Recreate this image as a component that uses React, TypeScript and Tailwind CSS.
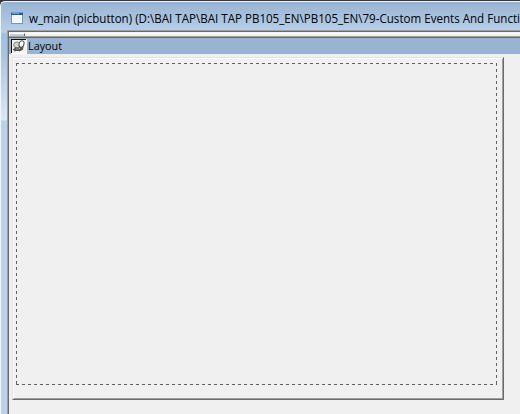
import React from 'react';

function WindowIcon() {
  return (
    <svg width="13" height="13" viewBox="0 0 13 13" className="block shrink-0" shapeRendering="crispEdges">
      <rect x="0" y="0" width="12" height="12" fill="#7894ba" />
      <rect x="1" y="1" width="10" height="10" fill="#fff" />
      <rect x="0" y="0" width="12" height="1" fill="#6d9bdc" />
      <rect x="0" y="1" width="12" height="2" fill="#1c5abd" />
      <rect x="1" y="1" width="7" height="1" fill="#5c9eea" />
      <rect x="2" y="4" width="8" height="6" fill="#f5f8fa" />
    </svg>
  );
}

function PushPin() {
  return (
    <svg width="16" height="15" viewBox="0 0 16 15" className="block shrink-0">
      <g shapeRendering="crispEdges">
        <rect width="16" height="15" fill="#fff" />
        <rect width="15" height="14" fill="#111" />
        <rect x="1" y="1" width="14" height="13" fill="#f4f4f0" />
      </g>
      <path d="M3 10L7 8L13 6L12 10L8 12L4 12Z" fill="#55558e" />
      <path d="M2 11L5 9M3 12L7 11M8 12L12 10" stroke="#57513a" strokeWidth="1.2" />
      <ellipse cx="6" cy="6" rx="3.4" ry="3" fill="#d3d3cc" stroke="#888880" />
      <ellipse cx="10.5" cy="5" rx="2.4" ry="3.3" fill="#fff" stroke="#55554d" transform="rotate(20 10.5 5)" />
      <path d="M4 8Q7 11 9 8L10 9Q9 11 6 11" fill="#bcb99c" stroke="#444438" strokeWidth=".7" />
    </svg>
  );
}

export default function App() {
  return (
    <div className="flex h-[414px] w-[520px] flex-col overflow-hidden bg-[#38343c] pt-px font-['Open_Sans','Noto_Sans',sans-serif] text-black">
      <div className="flex min-h-0 flex-1 flex-col rounded-tl-[5px] border-t border-l border-[#f2f6fa] bg-[linear-gradient(180deg,#98b3d2_0px,#b8d0ea_30px,#a3c0df_32px,#a6c3e2_50px,#d9e8f6_117px,#d9e8f6_118px,#b9d1ea_119px)]">
        <header className="flex h-[28px] shrink-0 items-start pt-[10px] pl-[10px]">
          <WindowIcon />
          <svg width="492" height="20" className="-mt-[3px] ml-[4px] block shrink-0 overflow-visible">
            <text x="1" y="14" fontSize="12" textLength="491" lengthAdjust="spacingAndGlyphs">
              w_main (picbutton) (D:\BAI TAP\BAI TAP PB105_EN\PB105_EN\79-Custom Events And Functi
            </text>
          </svg>
        </header>
        <div className="ml-[6px] flex min-h-0 flex-1 flex-col border-t border-l border-[#a0a0a0]">
          <div className="flex min-h-0 flex-1 flex-col border-t border-l border-[#696969] bg-[#f0f0f0]">
            <div className="flex h-[4px] shrink-0 bg-[linear-gradient(180deg,#f0f0f0_1px,#ffffff_1px,#ffffff_2px,#f0f0f0_2px)]">
              <div className="mt-px h-[3px] w-[16px] border-t border-l border-r border-t-white border-l-white border-r-[#696969] bg-[#bfd0e3]" />
            </div>
            <div className="flex h-[18px] shrink-0 items-start border-t border-[#a0a0a0] bg-[#99b4d1]">
              <div className="flex h-[17px] flex-1 items-start border-t border-[#696969] pt-px pl-[2px]">
                <PushPin />
                <svg width="40" height="16" className="-mt-px block overflow-visible">
                  <text x="1" y="12" fontSize="11.5" textLength="34" lengthAdjust="spacingAndGlyphs">Layout</text>
                </svg>
              </div>
            </div>
            <div className="mt-[3px] ml-[3px] h-[343px] w-[492px] border border-t-[#e3e3e3] border-l-[#e3e3e3] border-r-[#696969] border-b-[#696969]">
              <div className="h-full w-full border border-t-white border-l-white border-r-[#a0a0a0] border-b-[#a0a0a0]">
                <svg width="488" height="339" className="block" shapeRendering="crispEdges">
                  <path d="M2 4.5H483M2 325.5H483M2.5 4V326M482.5 4V326" fill="none" stroke="#606060" strokeDasharray="3 3" />
                </svg>
              </div>
            </div>
          </div>
        </div>
      </div>
    </div>
  );
}
